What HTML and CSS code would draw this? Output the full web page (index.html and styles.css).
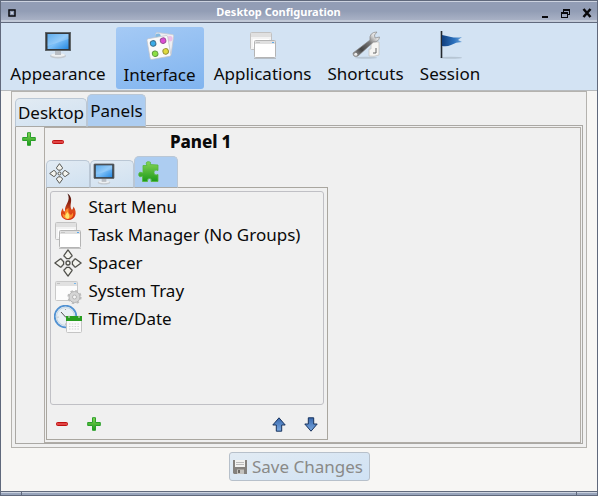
FILE: index.html
```html
<!DOCTYPE html>
<html lang="en">
<head>
<meta charset="utf-8">
<title>Desktop Configuration</title>
<link rel="stylesheet" href="styles.css">
</head>
<body>
<svg class="defs" width="0" height="0">
  <defs>
    <linearGradient id="screen" x1="0" y1="0" x2="1" y2="1"><stop offset="0" stop-color="#3b9be9"/><stop offset=".5" stop-color="#7dc0f8"/><stop offset="1" stop-color="#2588e0"/></linearGradient>
    <linearGradient id="green" x1="0" y1="0" x2="0" y2="1"><stop offset="0" stop-color="#86d455"/><stop offset="1" stop-color="#1b9a1b"/></linearGradient>
    <linearGradient id="blue" x1="0" y1="0" x2="0" y2="1"><stop offset="0" stop-color="#3868ae"/><stop offset="1" stop-color="#79a8e0"/></linearGradient>
    <linearGradient id="flame" x1="0" y1="0" x2="0" y2="1"><stop offset="0" stop-color="#3a1410"/><stop offset=".35" stop-color="#8f2413"/><stop offset=".65" stop-color="#df4b1b"/><stop offset="1" stop-color="#d12c12"/></linearGradient>
    <linearGradient id="flag" x1="0" y1="0" x2="1" y2="0"><stop offset="0" stop-color="#123f7d"/><stop offset=".6" stop-color="#2a70bd"/><stop offset="1" stop-color="#6ea4d8"/></linearGradient>
    <linearGradient id="metal" x1="0" y1="1" x2="1" y2="0"><stop offset="0" stop-color="#aaa"/><stop offset=".3" stop-color="#444"/><stop offset=".6" stop-color="#777"/><stop offset=".8" stop-color="#ddd"/><stop offset="1" stop-color="#eee"/></linearGradient>
    <symbol id="monitor" viewBox="0 0 28 28">
      <ellipse cx="14" cy="25" rx="8" ry="2.4" fill="#c4cad0"/><ellipse cx="14" cy="24" rx="7" ry="1.8" fill="#edf0f2"/>
      <path d="M11 20h6v4h-6z" fill="#b9bec4"/>
      <rect x="1" y="1" width="26" height="19" rx="1" fill="#34383c"/><rect x="1.5" y="1.5" width="25" height="18" rx="1" fill="none" stroke="#777c80" stroke-width=".7"/>
      <rect x="3.500" y="3" width="21" height="15" fill="url(#screen)"/><path d="M3.500 3h21v5l-21 7z" fill="#fff" opacity=".18"/>
    </symbol>
    <symbol id="windows" viewBox="0 0 28 28">
      <rect x="1.5" y="1.5" width="21" height="17" rx="1" fill="#f3f3f3" stroke="#c2c2c2"/><path d="M2 2h20v4H2z" fill="#e0e0e0"/><path d="M4 8h16v8H4z" fill="#fff"/>
      <rect x="5.5" y="9.5" width="21" height="17" rx="1" fill="#fff" stroke="#b4b4b4"/><path d="M6 10h20v3H6z" fill="#e0e0e0"/><path d="M23 11h2v1h-2z" fill="#5da9e8"/><path d="M7 11h4v1H7z" fill="#c5c5c5"/>
      <path d="M5 27.5h22" stroke="#999" opacity=".5"/>
    </symbol>
    <symbol id="spacer" viewBox="0 0 28 28">
      <g fill="#f4f4ef" stroke="#50504b" stroke-width="1.3" stroke-linejoin="round">
        <path id="petal" d="M14 .9L18 6.300Q18.300 7.800 16.600 8.200L15.500 9.600H12.500L11.400 8.200Q9.700 7.800 10 6.300z"/>
        <use href="#petal" transform="rotate(90 14 14)"/><use href="#petal" transform="rotate(180 14 14)"/><use href="#petal" transform="rotate(270 14 14)"/>
        <circle cx="14" cy="14" r="2"/>
      </g>
    </symbol>
    <symbol id="plus" viewBox="0 0 14 14"><path d="M5.5 .7h3v4.8h4.8v3H8.500v4.800h-3V8.500H.7v-3h4.800z" fill="url(#green)" stroke="#2aa02a" stroke-linejoin="round"/></symbol>
    <symbol id="minus" viewBox="0 0 12 4"><rect x=".5" y=".5" width="11" height="3" rx="1" fill="#e04545" stroke="#bf1010"/></symbol>
    <symbol id="arrow" viewBox="0 0 14 15"><path d="M7 .8L13.200 8H9.700v6.200H4.300V8H.8z" fill="url(#blue)" stroke="#18335d" stroke-linejoin="round"/></symbol>
    <symbol id="arrow-down" viewBox="0 0 14 15"><path d="M7 14.200L13.200 7H9.700V.8H4.300V7H.8z" fill="url(#blue)" stroke="#18335d" stroke-linejoin="round"/></symbol>
  </defs>
</svg>

<main class="window">
  <header class="titlebar">
    <svg class="menu-mark" viewBox="0 0 8 8"><path d="M1 1h6v6H1z" fill="#8f9ab3" stroke="#0a0a0e" stroke-width="1.500"/><path d="M3 3h2v2H3z" fill="#c3cad8"/></svg>
    <h1>Desktop Configuration</h1>
    <svg class="controls" viewBox="0 0 52 12"><path d="M1 8h6v2H1z"/><path d="M22 1h7v6h-2v-1h1V3h-5v1h-1z"/><path d="M20 4h7v6h-7zM21 6v3h5V6z" fill-rule="evenodd"/><path d="M42.500 1l7 8M49.500 1l-7 8" stroke="#09090c" stroke-width="2.500"/></svg>
  </header>

  <nav class="toolbar">
    <div class="tool appearance"><svg><use href="#monitor"/></svg><span>Appearance</span></div>
    <div class="tool interface active">
      <svg viewBox="0 0 28 28">
        <g transform="rotate(8 18 12)"><rect x="8.500" y="1.500" width="18" height="21" rx="1.500" fill="#eeeef2" stroke="#c5c8d0" stroke-width=".7"/><circle cx="23" cy="6" r="2.800" fill="#edbfe7"/><circle cx="11" cy="5" r="2.600" fill="#82b9e0"/></g>
        <g transform="rotate(-10 13 16)"><rect x="2.500" y="5" width="21" height="21" rx="1.500" fill="#fafafa" stroke="#c0c3ca" stroke-width=".7"/>
        <g stroke-width="1"><circle cx="8" cy="10.500" r="2.800" fill="#39ace9" stroke="#3d718e"/><circle cx="18.300" cy="9.500" r="2.800" fill="#dc4bd5" stroke="#9c4f99"/><circle cx="8.200" cy="21" r="2.800" fill="#8be044" stroke="#659e43"/><circle cx="19" cy="20.500" r="2.800" fill="#e0db3c" stroke="#969238"/></g></g>
      </svg><span>Interface</span></div>
    <div class="tool applications"><svg><use href="#windows"/></svg><span>Applications</span></div>
    <div class="tool shortcuts">
      <svg viewBox="0 0 28 28"><ellipse cx="14" cy="26.800" rx="11" ry="1" fill="#a8b4c0" opacity=".6"/>
        <path d="M19 11h8v13q-5 2-10 1v-7h2z" fill="#f5f5f3" stroke="#c4c4c2" stroke-width=".8"/><path d="M24 17v5h-3" fill="none" stroke="#666" stroke-width="1"/>
        <path d="M18 9Q17 1 25 1L22.500 4l.5 3 4.500-1Q27 11 21.500 11L6 25Q1 27 1 22z" fill="url(#metal)" stroke="#888" stroke-width=".7"/><circle cx="3.800" cy="23.300" r="1.500" fill="#eee"/>
      </svg><span>Shortcuts</span></div>
    <div class="tool session">
      <svg viewBox="0 0 28 28"><ellipse cx="15" cy="26.700" rx="11" ry="1" fill="#a5b2bf" opacity=".6"/><path d="M5.500 0v27" stroke="#24282e" stroke-width="1.600"/><path d="M6 4q5 1 9 2 5 1 11 0L22 9l4 2q-6 0-11 3-4 2-9 1z" fill="url(#flag)"/></svg><span>Session</span></div>
  </nav>

  <section class="page">
    <div class="outer-frame">
      <div class="tabs">
        <div class="tab desktop-tab">Desktop</div>
        <div class="tab panels-tab selected">Panels</div>
      </div>
      <div class="tab-page">
        <div class="rail"><svg class="plus"><use href="#plus"/></svg></div>
        <div class="panel">
          <div class="panel-head"><svg class="minus"><use href="#minus"/></svg><h2>Panel 1</h2></div>
          <div class="subtabs">
            <div class="subtab"><svg><use href="#spacer"/></svg></div>
            <div class="subtab"><svg class="large"><use href="#monitor"/></svg></div>
            <div class="subtab selected"><svg class="large" viewBox="0 0 22 22"><path d="M5 4.500h4Q7 1 10 .7 14 .7 12 3.500L20 4v5.500q-4-1.500-4 2t4 2v7h-7q1-3-1.500-3t-2 3H4.500V15Q.7 17 .7 13.500 .7 10 5 12z" fill="url(#green)" stroke="#55b83e" stroke-width=".8"/></svg></div>
          </div>
          <div class="plugin-pane">
            <ul class="plugins">
              <li><svg viewBox="0 0 28 28"><path d="M13.500 .5C21 6 14 12 18 17Q19.500 15 19.500 13.500C24 20 21 27 14.500 27 7 27 5 20 9 15 9 18 10 19 11 18 10 12 17.500 8 13.500 .5z" fill="url(#flame)"/><path d="M14.500 15Q13.500 20 17 22l2-2.500Q20 25 14.500 26 8 26 8.500 20.500l2.500 1.500Q10 17 14.500 15z" fill="#fb8c2c"/><path d="M13.500 19Q17 24 14 26 9.500 25 12 21z" fill="#ffe56d"/></svg><span>Start Menu</span></li>
              <li><svg><use href="#windows"/></svg><span>Task Manager (No Groups)</span></li>
              <li><svg><use href="#spacer"/></svg><span>Spacer</span></li>
              <li><svg viewBox="0 0 28 28"><rect x="1.500" y="4.500" width="22" height="19" rx="1" fill="#fcfcfc" stroke="#c9c9c9"/><path d="M2 5h21v4H2z" fill="#e1e1e1"/><path d="M20 6h2v1h-2z" fill="#76b7ec"/><path d="M3 6h3v1H3z" fill="#c1c1c1"/><circle cx="20.500" cy="20" r="5.500" fill="#d5d5d5" stroke="#b3b3b3"/><circle cx="20.500" cy="20" r="6.300" fill="none" stroke="#bbb" stroke-width="1.600" stroke-dasharray="2.500 2.450"/><circle cx="20.500" cy="20" r="2" fill="#f5f5f5" stroke="#b5b5b5"/></svg><span>System Tray</span></li>
              <li><svg viewBox="0 0 28 28"><circle cx="11.500" cy="11.500" r="10.800" fill="#e9f0f5" stroke="#5292d2" stroke-width="1.800"/><circle cx="11.500" cy="11.500" r="9" fill="none" stroke="#c5d5e3"/><path d="M7 7l4.500 5 5-.5" fill="none" stroke="#555" stroke-width="1"/><g fill="#999"><circle cx="11.500" cy="4.500" r=".6"/><circle cx="4" cy="12" r=".6"/><circle cx="11.500" cy="19" r=".6"/></g><rect x="12.500" y="11.500" width="15" height="16" rx="1" fill="#fafafa" stroke="#c5c5c5"/><path d="M12 11h16v5H12z" fill="#289e20"/><path d="M15 19h10M15 21.500h10M15 24h10" stroke="#d3d3d3" stroke-dasharray="1.500 1.300"/><path d="M15 10v3M25 10v3" stroke="#ddd"/></svg><span>Time/Date</span></li>
            </ul>
            <div class="actions">
              <svg class="minus"><use href="#minus"/></svg>
              <svg class="plus"><use href="#plus"/></svg>
              <svg class="arrow up"><use href="#arrow"/></svg>
              <svg class="arrow down"><use href="#arrow-down"/></svg>
            </div>
          </div>
        </div>
      </div>
    </div>
    <button class="save" disabled>
      <svg viewBox="0 0 14 14"><path d="M0 0h14v14H1L0 13z" fill="#85827e"/><path d="M2 0h10v7H2z" fill="#f2f2f0"/><path d="M3 2.500h8M3 4.500h8" stroke="#bbb"/><path d="M4 9.500h7V14H4z" fill="#c4c2be"/><path d="M5 10h2v3H5z" fill="#6d6a66"/></svg>
      <span>Save Changes</span>
    </button>
  </section>
  <footer class="handle"><i class="grip"></i><i class="grip"></i></footer>
</main>
</body>
</html>
```
FILE: styles.css
```css
* { box-sizing: border-box; }
body {
  margin: 0;
  font: 17px/24px "Noto Sans", sans-serif;
  color: #0a0a0a;
  overflow: hidden;
}
svg { display: block; flex: none; }
.defs { position: absolute; }

.window {
  width: 598px;
  height: 496px;
  display: flex;
  flex-direction: column;
  border: 1px solid #60697c;
  background: #f7f6f4;
}

.titlebar {
  height: 22px;
  flex: none;
  display: flex;
  align-items: center;
  padding: 0 4px 0 7px;
  border-top: 1px solid #ccd2df;
  border-bottom: 1px solid #60697c;
  background: linear-gradient(#929db5 0, #929db5 45%, #a8b1c5 90%, #c2cad8 91%);
}
.menu-mark { width: 8px; height: 8px; margin-top: 1px; }
.titlebar h1 {
  flex: 1;
  margin: 0;
  font: 700 11px/20px "Noto Sans", sans-serif;
  text-align: center;
  color: #fff;
}
.controls { width: 52px; height: 12px; margin-top: 3px; fill: #09090c; }

.toolbar {
  height: 68px;
  flex: none;
  display: flex;
  padding: 4px 0 0 6px;
  background: #d3e3f3;
  border-bottom: 1px solid #b7babd;
}
.tool {
  height: 62px;
  display: flex;
  flex-direction: column;
  align-items: center;
  padding-top: 4px;
  white-space: nowrap;
}
.tool svg { width: 28px; height: 28px; }
.tool span { margin-top: 3px; }
.appearance { width: 102px; margin-right: 7px; }
.interface { width: 88px; margin-right: 6px; }
.applications { width: 105px; margin-right: 6px; }
.shortcuts { width: 89px; }
.session { width: 80px; }
.tool.active {
  padding: 5px 1px 0 0;
  background: linear-gradient(165deg, #a5caf5, #80b4ef);
  border-radius: 3px;
}

.page {
  flex: 1;
  display: flex;
  flex-direction: column;
  align-items: flex-start;
  padding-left: 10px;
}
.outer-frame {
  width: 576px;
  height: 357px;
  padding: 2px 3px 3px 3px;
  border: 1px solid #b4b2ae;
  background: #f0f0f0;
}
.tabs {
  height: 33px;
  display: flex;
  align-items: flex-end;
  margin-bottom: -2px;
  position: relative;
}
.tab {
  height: 29px;
  border: 1px solid #bac7d5;
  border-bottom-color: #a9a9a6;
  border-radius: 5px 5px 0 0;
  background: linear-gradient(165deg, #e2ebf3, #d0e1f1);
  text-align: center;
  line-height: 28px;
}
.desktop-tab { width: 72px; }
.panels-tab { width: 59px; height: 33px; line-height: 32px; }
.tab.selected, .subtab.selected { background: #adcdf1; }
.tab-page {
  height: 319px;
  display: flex;
  padding: 1px;
  border: 1px solid #aaa8a4;
}
.rail { width: 27px; flex: none; padding: 5px 0 0 5px; }
.plus { width: 14px; height: 14px; }
.minus { width: 12px; height: 4px; }
.panel {
  width: 537px;
  height: 316px;
  padding: 0 1px;
  border: 1px solid #b0aca6;
}
.panel-head {
  height: 28px;
  display: flex;
  align-items: center;
  padding-left: 6px;
}
.panel-head .minus { margin-top: -1px; }
.panel-head h2 {
  margin: 0 0 0 106px;
  font: 800 17px/24px "Noto Sans", sans-serif;
  letter-spacing: -0.1px;
}
.subtabs {
  height: 32px;
  display: flex;
  align-items: flex-end;
  margin-bottom: -1px;
  position: relative;
}
.subtab {
  width: 44px;
  height: 28px;
  padding: 2px 0 0 2px;
  border: 1px solid #bac7d5;
  border-bottom-color: #a9a9a6;
  border-radius: 5px 5px 0 0;
  background: linear-gradient(165deg, #e2ebf3, #d0e1f1);
}
.subtab.selected { height: 32px; padding: 4px 0 0 3px; }
.subtab svg { width: 21px; height: 21px; }
.subtab svg.large { width: 22px; height: 22px; }
.plugin-pane {
  width: 282px;
  height: 253px;
  padding: 3px;
  border: 1px solid #a9a69f;
}
.plugins {
  width: 274px;
  height: 214px;
  margin: 0;
  padding: 1px 3px;
  list-style: none;
  border: 1px solid #c0c0c5;
  border-radius: 3px;
}
.plugins li {
  height: 28px;
  display: flex;
  align-items: center;
  gap: 6.4px;
  white-space: nowrap;
}
.plugins svg { width: 28px; height: 28px; }
.plugins li:not(:nth-child(4)) svg { margin-top: -1px; }
.actions {
  height: 34px;
  display: flex;
  align-items: center;
  padding: 4px 6px 0 6px;
}
.actions .plus { margin-left: 19px; }
.arrow { width: 14px; height: 15px; }
.up { margin-left: auto; }
.down { margin-left: 18px; }

.save {
  width: 141px;
  height: 29px;
  display: flex;
  align-items: center;
  gap: 5px;
  margin: 4px 0 0 218px;
  padding: 0 3px;
  border: 1px solid #b7c0ca;
  border-radius: 3px;
  background: linear-gradient(165deg, #e2ebf3, #d0e2f4);
  color: #8a8a88;
  font: 17px/24px "Noto Sans", sans-serif;
  white-space: nowrap;
}
.save svg { width: 14px; height: 14px; }

.handle {
  height: 4px;
  flex: none;
  display: flex;
  justify-content: space-between;
  padding: 0 20px;
  border-top: 1px solid #60697c;
  background: linear-gradient(#ccd3df 0, #ccd3df 33%, #98a4bb 34%);
}
.grip { width: 1px; background: #60697c; }
```
